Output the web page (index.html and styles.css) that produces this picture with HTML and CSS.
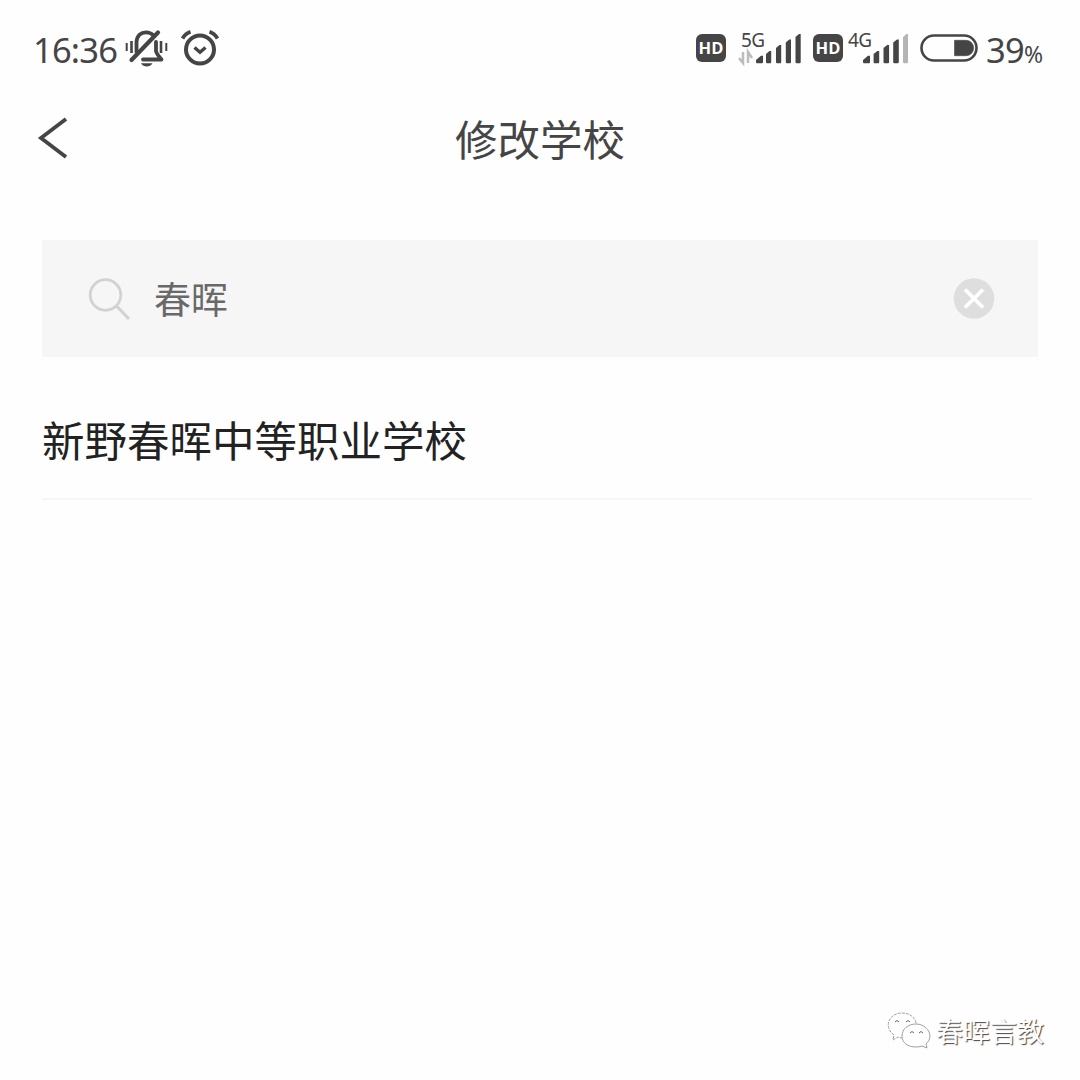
FILE: index.html
```html
<!DOCTYPE html>
<html lang="zh-CN">
<head>
<meta charset="utf-8">
<title>修改学校</title>
<link rel="stylesheet" href="styles.css">
</head>
<body>
<div class="screen">
  <header class="status">
    <span class="time">16:36</span>
    <svg class="mute" viewBox="0 0 44 40" fill="none" stroke="#454545" stroke-width="3.800" stroke-linecap="round" stroke-linejoin="round">
      <path d="M1.700 15v8M41.300 15v8" stroke-width="2" stroke-linecap="butt"/>
      <path d="M6.500 13v12M36 13v12" stroke-width="2.600" stroke-linecap="butt"/>
      <path d="M11.500 24V14C12 7.500 16 4.300 21 4.300c3 0 5.500 1 7.500 3M31 14v9q0 2 5.500 8.500H18"/>
      <path d="M6.500 32L33 4.500" stroke-width="4.200"/>
      <path d="M16 35.200h11.500c-2.500 4.300-9 4.300-11.500 0z" fill="#454545" stroke="none"/>
    </svg>
    <svg class="alarm" viewBox="0 0 40 38" fill="none" stroke="#454545" stroke-width="4">
      <circle cx="20" cy="20.500" r="14"/>
      <path d="M14.500 18.500l5.500 4.700 5.500-4.700" stroke-width="3.400"/>
      <path d="M2.500 9.500Q5.500 4.500 10.500 2.800M29.500 2.800Q34.500 4.500 37.500 9.500" stroke-width="3.800"/>
    </svg>
    <span class="hd first">HD</span>
    <div class="cell five">
      <span class="net">5G</span>
      <svg viewBox="0 0 64 36">
        <path d="M5 22v11L1 28M10 33V22l4 6" fill="none" stroke="#bcbcbc" stroke-width="2.500"/>
        <path d="M18 32v-2l5-4.300h2V32q0 1.300-1 1.300h-5q-1 0-1-1.300zM28 32v-8l3.500-3h1.700v11q0 1.300-1 1.300H29q-1 0-1-1.300zM38 32V18l3.500-3h1.700v17q0 1.300-1 1.300H39q-1 0-1-1.300zM47.800 32V12.500l3.500-3H53V32q0 1.300-1 1.300h-3.200q-1 0-1-1.300zM57.500 32V7l3.500-3h1.700v28q0 1.300-1 1.300h-3.200q-1 0-1-1.300z" fill="#454545"/>
      </svg>
    </div>
    <span class="hd">HD</span>
    <div class="cell four">
      <span class="net">4G</span>
      <svg viewBox="0 0 60 36">
        <path d="M15 32v-2l5-4.300h2V32q0 1.300-1 1.300h-5q-1 0-1-1.300zM25.600 32v-8l3.700-3h1.900v11q0 1.300-1 1.300h-3.600q-1 0-1-1.300zM35.500 32V18l3.700-3h1.900v17q0 1.300-1 1.300h-3.600q-1 0-1-1.300zM45.200 32V12.500l3.700-3h1.900V32q0 1.300-1 1.300h-3.600q-1 0-1-1.300z" fill="#454545"/>
        <path d="M55 32V7l3.500-3H60v28q0 1.300-1 1.300h-3q-1 0-1-1.300z" fill="#b5b5b5"/>
      </svg>
    </div>
    <svg class="battery" viewBox="0 0 58 28">
      <rect x="1.500" y="1.500" width="55" height="25" rx="12.500" fill="none" stroke="#454545" stroke-width="2.600"/>
      <path d="M34.500 6.300H46a7.700 7.700 0 0 1 0 15.400H34.500z" fill="#454545" stroke="#454545" stroke-width=".6" stroke-linejoin="round"/>
    </svg>
    <span class="level">39<small>%</small></span>
  </header>
  <nav class="nav">
    <svg class="back" viewBox="0 0 30 42" fill="none" stroke="#454545" stroke-width="3.800"><path d="M28 2L3 21l25 19"/></svg>
    <h1 class="title">修改学校</h1>
  </nav>
  <div class="search">
    <svg class="lens" viewBox="0 0 42 42" fill="none" stroke="#d2d2d2" stroke-width="2.800"><circle cx="16.500" cy="17" r="15.300"/><path d="M27.500 28L40 41" stroke-width="3.200"/></svg>
    <span class="query">春晖</span>
    <svg class="clear" viewBox="0 0 42 42"><circle cx="21" cy="20.500" r="20.300" fill="#dedede"/><path d="M12 11.500l18 18M30 11.500l-18 18" stroke="#fff" stroke-width="3.800"/></svg>
  </div>
  <ul class="results">
    <li class="result">新野春晖中等职业学校</li>
  </ul>
  <footer class="credit">
    <svg class="wechat" viewBox="0 0 46 40" fill="#fff" stroke="#a0a0a0" stroke-width="1">
      <path d="M17 27q-3 0-5-1l-5 3 1-5C-3 16 3 2 16 2c8 0 14 5 14 11" stroke-dasharray="3 1"/>
      <path d="M30 13c-8 0-14 5-14 12s6 11 14 11q3 0 6-1l5 2-1-4c9-8 1-20-10-20z"/>
      <path d="M9 11q2-3 4 0M20 11q2-3 4 0M24 22q2-3 4 0M33 22q2-3 4 0" fill="none" stroke="#666"/>
    </svg>
    <span>春晖言教</span>
  </footer>
</div>
</body>
</html>
```
FILE: styles.css
```css
* { box-sizing: border-box; }
body { margin: 0; background: #fefefe; font-family: "Noto Sans", "Noto Sans CJK SC", sans-serif; color: #454545; }
svg { display: block; flex: none; overflow: visible; }
.screen { width: 1080px; height: 1080px; display: flex; flex-direction: column; overflow: hidden; }
.status { height: 96px; padding-left: 33px; display: flex; align-items: center; white-space: nowrap; }
.time { width: 92px; font-size: 34.500px; letter-spacing: -0.800px; line-height: 40px; padding-top: 2px; height: 40px; }
.mute { width: 44px; height: 40px; }
.alarm { width: 40px; height: 38px; margin-left: 11px; }
.hd { width: 30px; height: 28px; border-radius: 6px; background: #454545; color: #fff; font: 700 16.500px/28px "Open Sans", sans-serif; text-align: center; }
.hd.first { margin-left: 476px; }
.cell { position: relative; height: 36px; }
.cell svg { width: 100%; height: 36px; }
.five { width: 64px; margin: 0 11px 0 12px; }
.four { width: 60px; margin: 0 12px 0 5px; }
.net { position: absolute; left: 3px; top: -2px; font-size: 19px; line-height: 24px; letter-spacing: -0.500px; }
.four .net { left: 0; }
.battery { width: 58px; height: 28px; }
.level { margin-left: 8px; font-size: 34.500px; letter-spacing: -0.800px; line-height: 40px; height: 40px; padding-top: 2px; }
.level small { font-size: 23px; }
.nav { height: 84px; display: grid; grid-template-columns: 80px 1fr 80px; align-items: center; }
.back { width: 30px; height: 42px; margin-left: 38px; }
.title { margin: 0; text-align: center; font: 400 42.500px/60px "Noto Sans CJK SC", sans-serif; }
.search { margin: 60px 42px 0; height: 117px; background: #f6f6f6; display: flex; align-items: center; padding: 0 43px 0 47px; }
.lens { width: 42px; height: 42px; }
.query { flex: 1; margin-left: 23px; padding-bottom: 2px; font: 400 37px/54px "Noto Sans CJK SC", sans-serif; color: #696969; }
.clear { width: 42px; height: 42px; }
.results { list-style: none; margin: 0; padding: 0 48px 0 42px; }
.result { height: 143px; padding-top: 51px; border-bottom: 2px solid #f6f6f6; font: 400 42.500px/62px "Noto Sans CJK SC", sans-serif; color: #222; }
.credit { margin-top: auto; height: 99px; padding: 0 35px 0 886px; display: flex; align-items: center; font: 400 27px/40px "Noto Sans CJK SC", sans-serif; color: #fff; text-shadow: 1px 1px 1px #444; white-space: nowrap; }
.wechat { width: 46px; height: 40px; margin-right: 4px; }
```
